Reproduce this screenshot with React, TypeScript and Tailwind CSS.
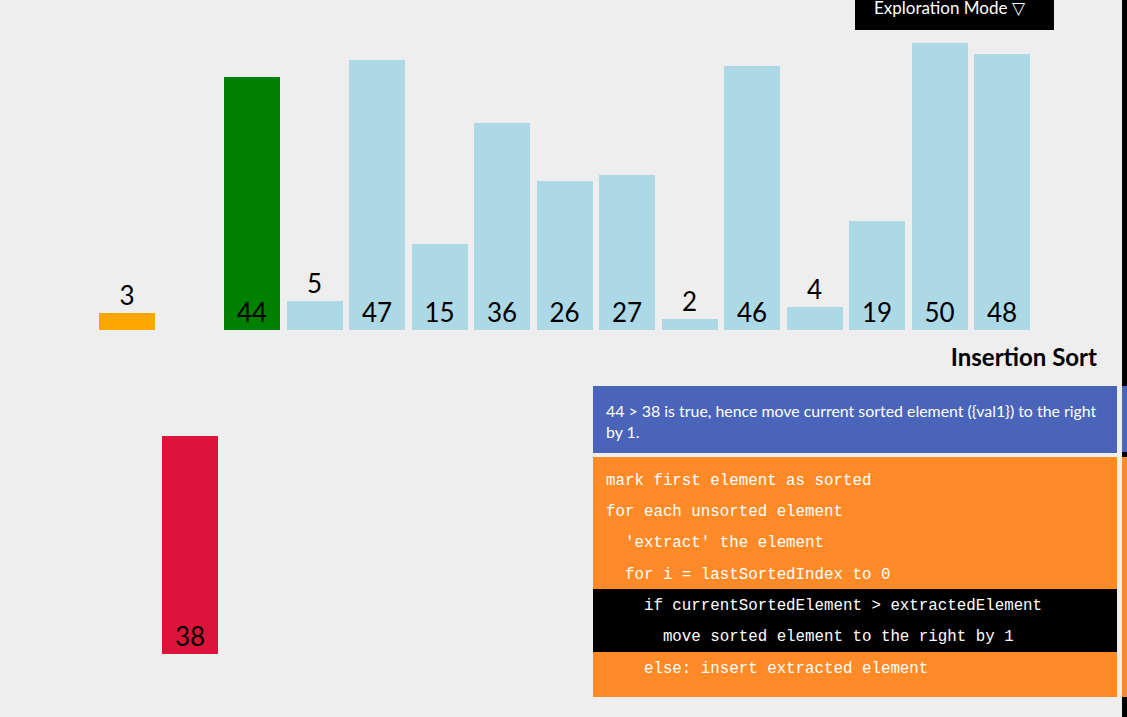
import React from 'react';

type Bar = { v: number | null; color: string };

const UNIT = 5.74;

const bars: Bar[] = [
  { v: 3, color: 'bg-[#ffa500]' },
  { v: null, color: '' },
  { v: 44, color: 'bg-[#008000]' },
  { v: 5, color: 'bg-[#add8e6]' },
  { v: 47, color: 'bg-[#add8e6]' },
  { v: 15, color: 'bg-[#add8e6]' },
  { v: 36, color: 'bg-[#add8e6]' },
  { v: 26, color: 'bg-[#add8e6]' },
  { v: 27, color: 'bg-[#add8e6]' },
  { v: 2, color: 'bg-[#add8e6]' },
  { v: 46, color: 'bg-[#add8e6]' },
  { v: 4, color: 'bg-[#add8e6]' },
  { v: 19, color: 'bg-[#add8e6]' },
  { v: 50, color: 'bg-[#add8e6]' },
  { v: 48, color: 'bg-[#add8e6]' },
];

const code = [
  { text: 'mark first element as sorted', active: false },
  { text: 'for each unsorted element', active: false },
  { text: "  'extract' the element", active: false },
  { text: '  for i = lastSortedIndex to 0', active: false },
  { text: '    if currentSortedElement > extractedElement', active: true },
  { text: '      move sorted element to the right by 1', active: true },
  { text: '    else: insert extracted element', active: false },
];

const label = "text-[26px] leading-[26px] text-black font-['Lato','Open_Sans',sans-serif]";

const BarCol: React.FC<{ bar: Bar }> = ({ bar }) => {
  if (bar.v === null) return <div className="w-[56px] shrink-0" />;
  const h = Math.round(bar.v * UNIT);
  const small = bar.v <= 5;
  return (
    <div className="w-[56px] shrink-0 flex flex-col items-center justify-end">
      {small && <span className={`${label} mb-[5px]`}>{bar.v}</span>}
      <div
        className={`w-full ${bar.color} flex items-end justify-center pb-[5px]`}
        style={{ height: h }}
      >
        {!small && <span className={label}>{bar.v}</span>}
      </div>
    </div>
  );
};

export default function App() {
  return (
    <div className="w-[1127px] h-[717px] bg-[#eeeeee] overflow-hidden flex font-['Lato','Open_Sans',sans-serif]">
      <div className="w-[1122px] shrink-0 flex flex-col">
        {/* mode tab */}
        <div className="h-[30px] flex">
          <div className="ml-[855px] w-[199px] h-[30px] bg-black text-white text-[17px] leading-[16px] pl-[19px]">
            Exploration Mode ▽
          </div>
        </div>

        {/* bars */}
        <div className="h-[300px] flex items-end gap-[6.5px] pl-[99px]">
          {bars.map((b, i) => (
            <BarCol key={i} bar={b} />
          ))}
        </div>

        <div className="flex flex-1">
          {/* extracted element */}
          <div className="w-[593px] shrink-0 pl-[162px] pt-[106px]">
            <div
              className="w-[56px] bg-[#dc143c] flex items-end justify-center pb-[5px]"
              style={{ height: Math.round(38 * UNIT) }}
            >
              <span className={label}>38</span>
            </div>
          </div>

          {/* status + pseudocode */}
          <div className="w-[524px] shrink-0 flex flex-col">
            <div className="mt-[12px] h-[30px] pr-[20px] text-right text-[24px] leading-[30px] font-bold text-black">
              Insertion Sort
            </div>
            <div className="mt-[14px] h-[67px] bg-[#4a64b9] text-white text-[15.9px] leading-[21px] pl-[13px] pt-[14px]">
              44 &gt; 38 is true, hence move current sorted element ({'{val1}'}) to the right
              <br />
              by 1.
            </div>
            <div className="mt-[4px] h-[240px] bg-[#ff8a27] pt-[7px] font-['Liberation_Mono','Courier_New',monospace] text-[15.8px] text-white">
              {code.map((line, i) => (
                <div
                  key={i}
                  className={`h-[31.3px] flex items-center pl-[13px] pt-[4px] whitespace-pre ${line.active ? 'bg-black' : ''}`}
                >
                  {line.text}
                </div>
              ))}
            </div>
          </div>
        </div>
      </div>

      {/* clipped neighbour panel */}
      <div className="w-[5px] shrink-0 bg-black flex flex-col">
        <div className="mt-[386px] h-[66px] bg-[#4a64b9]" />
        <div className="mt-[5px] h-[240px] bg-[#ff8a27]" />
      </div>
    </div>
  );
}
